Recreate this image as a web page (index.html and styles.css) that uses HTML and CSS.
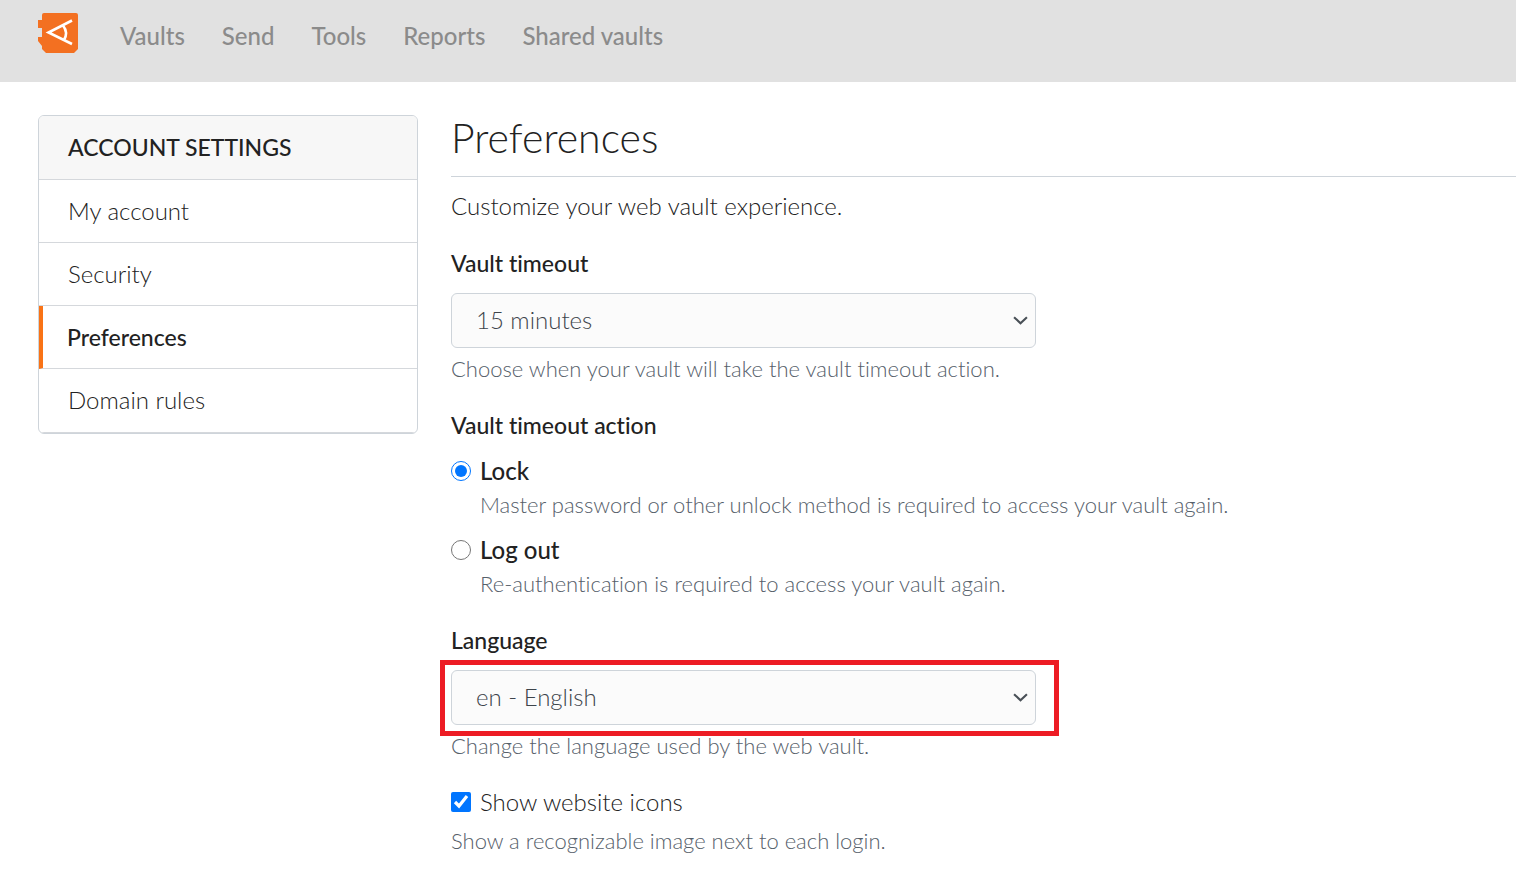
FILE: index.html
```html
<!DOCTYPE html>
<html lang="en">
<head>
<meta charset="utf-8">
<meta name="viewport" content="width=device-width, initial-scale=1">
<title>Preferences</title>
<link rel="stylesheet" href="styles.css">
</head>
<body>
<header class="topbar">
  <a class="logo" href="#" aria-label="Home">
    <svg width="40" height="40" viewBox="0 0 40 40" aria-hidden="true">
      <path fill="#f37021" d="M6 0H38Q40 0 40 2V36L36 40H8L4 36V33L0 28V24H4V15H0V7H4V2Q4 0 6 0Z"/>
      <path fill="none" stroke="#fff" stroke-width="2.6" d="M34 7.500L10.500 19.500L34 31M25 12.500Q30.500 19.500 26 27"/>
    </svg>
  </a>
  <nav class="nav">
    <a href="#">Vaults</a>
    <a href="#">Send</a>
    <a href="#">Tools</a>
    <a href="#">Reports</a>
    <a href="#">Shared vaults</a>
  </nav>
</header>
<div class="page">
  <aside class="sidebar">
    <h2 class="sidebar-title">ACCOUNT SETTINGS</h2>
    <a class="side-link" href="#">My account</a>
    <a class="side-link" href="#">Security</a>
    <a class="side-link active" href="#" aria-current="page">Preferences</a>
    <a class="side-link" href="#">Domain rules</a>
  </aside>
  <main class="content">
    <h1 class="title">Preferences</h1>
    <p class="intro">Customize your web vault experience.</p>
    <form>
      <div class="group">
        <label class="label" for="timeout">Vault timeout</label>
        <div class="select-wrap">
          <select class="select" id="timeout"><option>15 minutes</option></select>
          <svg class="chevron" viewBox="0 0 14 8" aria-hidden="true"><path d="M1 1L7 6.500L13 1"/></svg>
        </div>
        <p class="hint">Choose when your vault will take the vault timeout action.</p>
      </div>
      <fieldset class="group">
        <legend class="label">Vault timeout action</legend>
        <div class="choice">
          <input type="radio" name="action" id="lock" checked>
          <label class="strong" for="lock">Lock</label>
          <p class="choice-hint">Master password or other unlock method is required to access your vault again.</p>
        </div>
        <div class="choice">
          <input type="radio" name="action" id="logout">
          <label class="strong" for="logout">Log out</label>
          <p class="choice-hint">Re-authentication is required to access your vault again.</p>
        </div>
      </fieldset>
      <div class="group">
        <label class="label" for="language">Language</label>
        <div class="select-wrap highlighted">
          <select class="select" id="language"><option>en - English</option></select>
          <svg class="chevron" viewBox="0 0 14 8" aria-hidden="true"><path d="M1 1L7 6.500L13 1"/></svg>
        </div>
        <p class="hint">Change the language used by the web vault.</p>
      </div>
      <div class="group">
        <div class="choice">
          <input type="checkbox" id="icons" checked>
          <label for="icons">Show website icons</label>
        </div>
        <p class="hint">Show a recognizable image next to each login.</p>
      </div>
    </form>
  </main>
</div>
</body>
</html>
```
FILE: styles.css
```css
* {
  box-sizing: border-box;
}

body {
  margin: 0;
  background: #fff;
  color: #222;
  font-family: Lato, "Open Sans", sans-serif;
  font-size: 24px;
  font-variant-ligatures: none;
  font-weight: 300;
  line-height: 36px;
}

h1, h2, p, fieldset, legend {
  margin: 0;
  padding: 0;
  border: 0;
}

a {
  color: inherit;
  text-decoration: none;
}

.topbar {
  display: flex;
  align-items: flex-start;
  gap: 42px;
  padding: 13px 38px 28px;
  background: #e1e1e1;
}

.logo,
.logo svg {
  display: block;
}

.nav {
  display: flex;
  gap: 37px;
  padding-top: 5px;
  color: #8b8b8b;
  font-weight: 500;
}

.page {
  display: flex;
  align-items: flex-start;
  gap: 33px;
  padding: 33px 0 0 38px;
}

.sidebar {
  flex: 0 0 380px;
  overflow: hidden;
  border: 1px solid #ced4da;
  border-radius: 6px;
}

.sidebar-title {
  padding: 13px 29px 14px;
  border-bottom: 1px solid #d5d8dc;
  background: #f7f7f7;
  font-size: 23px;
  font-weight: 500;
}

.side-link {
  display: block;
  padding: 13px 29px;
  border-bottom: 1px solid #d5d8dc;
}

.side-link:last-child {
  padding-bottom: 14px;
}

.side-link.active {
  padding-left: 24px;
  border-left: 4px solid #f97316;
  font-size: 23px;
  font-weight: 500;
}

.content {
  flex: 1;
  min-width: 0;
}

.title {
  padding-bottom: 15px;
  border-bottom: 1px solid #ced4da;
  font-size: 41px;
  font-weight: 300;
  line-height: 46px;
}

.intro {
  padding: 11px 0 21px;
}

.group {
  margin-bottom: 21px;
}

.label {
  display: block;
  padding-bottom: 12px;
  font-size: 23px;
  font-weight: 500;
}

legend.label {
  padding-bottom: 10px;
}

.strong {
  font-weight: 500;
}

.select-wrap {
  position: relative;
  width: 585px;
  max-width: 100%;
}

.select {
  display: block;
  width: 100%;
  height: 55px;
  padding: 0 24px 2px;
  border: 1px solid #ced4da;
  border-radius: 6px;
  appearance: none;
  background: #fbfbfb;
  color: #3d444b;
  font: inherit;
}

.chevron {
  position: absolute;
  top: 23px;
  right: 8px;
  width: 15px;
  height: 9px;
  fill: none;
  stroke: #495057;
  stroke-width: 2;
  pointer-events: none;
}

.highlighted::before {
  content: "";
  position: absolute;
  inset: -10px -23px -11px -11px;
  border: 5px solid #ed1c24;
  pointer-events: none;
}

.hint,
.choice-hint {
  color: #56606a;
  font-size: 22px;
  line-height: 32px;
}

.hint {
  padding-top: 5px;
  padding-bottom: 1px;
}

.choice {
  display: grid;
  grid-template-columns: 20px 1fr;
  align-items: center;
  column-gap: 9px;
  margin-bottom: 11px;
}

.choice:last-child {
  margin-bottom: 1px;
}

.choice:first-child {
  margin-bottom: 0;
}

.choice input {
  width: 20px;
  height: 20px;
  margin: 0;
  accent-color: #0075ff;
}

.choice-hint {
  grid-column: 2;
}
```
